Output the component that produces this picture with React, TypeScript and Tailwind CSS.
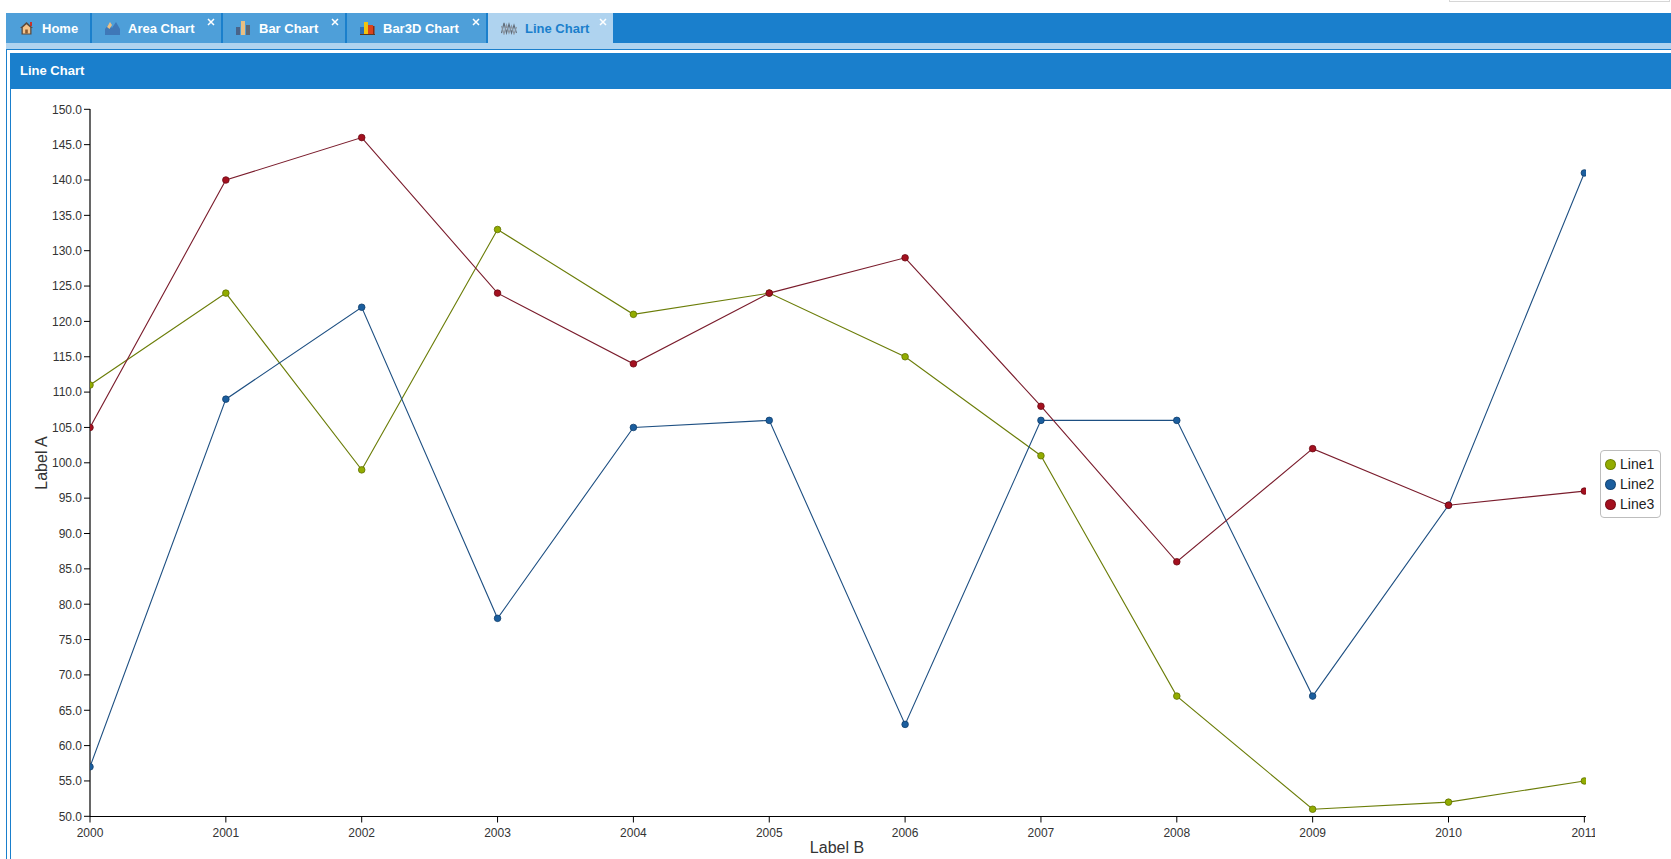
import React from "react";

const years = [2000, 2001, 2002, 2003, 2004, 2005, 2006, 2007, 2008, 2009, 2010, 2011];

const series = [
  {
    name: "Line1",
    line: "#6b7d08",
    dot: "#92ac00",
    dotStroke: "#5f7000",
    data: [111, 124, 99, 133, 121, 124, 115, 101, 67, 51, 52, 55],
  },
  {
    name: "Line2",
    line: "#1d4f82",
    dot: "#1b5e9e",
    dotStroke: "#123f6c",
    data: [57, 109, 122, 78, 105, 106, 63, 106, 106, 67, 94, 141],
  },
  {
    name: "Line3",
    line: "#7a1c2c",
    dot: "#a3101f",
    dotStroke: "#6c0a14",
    data: [105, 140, 146, 124, 114, 124, 129, 108, 86, 102, 94, 96],
  },
];

// page coordinates
const xAt = (i: number) => 90 + i * 135.85;
const yAt = (v: number) => 816.3 - (v - 50) * 7.07;

const yTicks = Array.from({ length: 21 }, (_, i) => 50 + i * 5);

function HomeIcon() {
  return (
    <svg width="15" height="14" viewBox="0 0 15 14">
      <rect x="11" y="1" width="2" height="4" fill="#c8322a" />
      <path d="M7.5 1 L1 7 L2.5 7 L2.5 13.5 L12.5 13.5 L12.5 7 L14 7 Z" fill="#5a4a3e" />
      <path d="M7.5 3.2 L3.8 6.6 L3.8 12.5 L11.2 12.5 L11.2 6.6 Z" fill="#f4c38a" />
      <rect x="6.2" y="8.5" width="2.6" height="4" fill="#8a5a30" />
    </svg>
  );
}

function AreaIcon() {
  return (
    <svg width="15" height="14" viewBox="0 0 15 14">
      <path d="M0 14 L0 8 L4 3 L7 7 L11 1 L15 8 L15 14 Z" fill="#3f78b8" />
      <path d="M2 6 L5 1 L7 4 L4.5 8 Z" fill="#e9c187" />
    </svg>
  );
}

function BarIcon() {
  return (
    <svg width="15" height="14" viewBox="0 0 15 14">
      <rect x="0" y="6" width="4" height="8" fill="#49648a" />
      <rect x="5" y="0" width="4" height="14" fill="#e9bf82" />
      <rect x="10" y="4" width="4" height="10" fill="#5b6878" />
    </svg>
  );
}

function Bar3DIcon() {
  return (
    <svg width="15" height="14" viewBox="0 0 15 14">
      <rect x="0" y="6" width="4" height="8" fill="#2f6db5" />
      <rect x="4" y="1" width="4" height="13" fill="#f1c40f" />
      <rect x="8" y="4" width="5" height="10" fill="#d9431e" />
      <rect x="13" y="5" width="1.5" height="9" fill="#8a2a10" />
      <rect x="0" y="13" width="15" height="1" fill="#5a3a20" />
    </svg>
  );
}

function LineIcon() {
  return (
    <svg width="16" height="14" viewBox="0 0 16 14" fill="none" stroke="#5f6b78" strokeWidth="1.1">
      <path d="M0.5 12 L3 2 L5.5 12 L8 3 L10.5 12 L13 4 L15.5 12" />
      <path d="M0.5 5 L3 13 L5.5 4 L8 12 L10.5 5 L13 13 L15.5 6" stroke="#8c95a0" />
    </svg>
  );
}

function CloseX() {
  return (
    <svg width="8" height="8" viewBox="0 0 8 8" stroke="white" strokeWidth="1.5">
      <path d="M1 1 L7 7 M7 1 L1 7" />
    </svg>
  );
}

const tabs = [
  { label: "Home", icon: <HomeIcon />, w: "w-[84px]", close: false, active: false },
  { label: "Area Chart", icon: <AreaIcon />, w: "w-[129px]", close: true, active: false },
  { label: "Bar Chart", icon: <BarIcon />, w: "w-[122px]", close: true, active: false },
  { label: "Bar3D Chart", icon: <Bar3DIcon />, w: "w-[139px]", close: true, active: false },
  { label: "Line Chart", icon: <LineIcon />, w: "w-[125px]", close: true, active: true },
];

function LineChart() {
  return (
    <svg width="1584" height="770" className="block">
      <defs>
        <clipPath id="plot">
          <rect x="90" y="90" width="1496" height="740" />
        </clipPath>
      </defs>
      <g transform="translate(-11,-89)" fontFamily="'Liberation Sans', Arial, sans-serif">
        {/* axes */}
        <line x1="90" y1="109" x2="90" y2="816.5" stroke="#000" strokeWidth="1.2" />
        <line x1="90" y1="816.5" x2="1586" y2="816.5" stroke="#000" strokeWidth="1.2" />
        {yTicks.map((v) => (
          <g key={v}>
            <line x1="84" y1={yAt(v)} x2="90" y2={yAt(v)} stroke="#000" />
            <text x="82" y={yAt(v) + 4.3} fontSize="12" fill="#333" textAnchor="end">
              {v.toFixed(1)}
            </text>
          </g>
        ))}
        {years.map((yr, i) => (
          <g key={yr}>
            <line x1={xAt(i)} y1="816.5" x2={xAt(i)} y2="822.5" stroke="#000" />
            <text x={xAt(i)} y="836.5" fontSize="12" fill="#333" textAnchor="middle">
              {yr}
            </text>
          </g>
        ))}
        <text
          x="0"
          y="0"
          fontSize="16"
          fill="#333"
          textAnchor="middle"
          transform="translate(46.5,463) rotate(-90)"
        >
          Label A
        </text>
        <text x="837" y="852.5" fontSize="16" fill="#333" textAnchor="middle">
          Label B
        </text>

        {/* series */}
        <g clipPath="url(#plot)">
          {series.map((s) => (
            <g key={s.name}>
              <polyline
                points={s.data.map((v, i) => `${xAt(i)},${yAt(v)}`).join(" ")}
                fill="none"
                stroke={s.line}
                strokeWidth="1.1"
              />
              {s.data.map((v, i) => (
                <circle
                  key={i}
                  cx={xAt(i)}
                  cy={yAt(v)}
                  r="3.3"
                  fill={s.dot}
                  stroke={s.dotStroke}
                  strokeWidth="0.8"
                />
              ))}
            </g>
          ))}
        </g>
      </g>
    </svg>
  );
}

export default function App() {
  return (
    <div className="w-[1671px] h-[859px] overflow-hidden bg-white font-['Liberation_Sans',Arial,sans-serif]">
      {/* top strip with the edge of a search box */}
      <div className="h-[13px] flex justify-end">
        <div className="w-[221px] h-[2px] mr-[1px] border-x border-b border-[#d6d6d6]" />
      </div>

      {/* tab bar */}
      <div className="ml-[6px] h-[30px] bg-[#1a7fcc] flex gap-[2px]">
        {tabs.map((t) => (
          <div
            key={t.label}
            className={`relative ${t.w} h-full flex items-center gap-[8px] pl-[13px] text-[13px] font-bold ${
              t.active ? "bg-[#afd3ef] text-[#1a7fcc]" : "bg-[#4e9fd9] text-white"
            }`}
          >
            {t.icon}
            <span className="leading-none">{t.label}</span>
            {t.close && (
              <span className="absolute right-[6px] top-[5px] flex">
                <CloseX />
              </span>
            )}
          </div>
        ))}
      </div>
      <div className="ml-[6px] h-[6px] bg-[#afd3ef]" />

      {/* panel */}
      <div className="ml-[6px] border-l border-t border-[#1a7fcc] pl-[3px] pt-[3px] h-[830px]">
        <div className="border-l border-[#1a7fcc] h-full">
          <div className="h-[36px] bg-[#1a7fcc] flex items-center pl-[9px] text-[13px] font-bold text-white">
            Line Chart
          </div>
          <div className="relative">
            <LineChart />
            <div className="absolute left-[1589px] top-[361px] w-[61px] h-[68px] border-[1.5px] border-[#bdbdbd] rounded-[4px] bg-white flex flex-col justify-center gap-[4px] pl-[4px]">
              {series.map((s) => (
                <div key={s.name} className="flex items-center gap-[4px] h-[16px]">
                  <span
                    className="w-[11px] h-[11px] rounded-full border border-black/25"
                    style={{ backgroundColor: s.dot }}
                  />
                  <span className="text-[14px] text-[#222] leading-none">{s.name}</span>
                </div>
              ))}
            </div>
          </div>
        </div>
      </div>
    </div>
  );
}
